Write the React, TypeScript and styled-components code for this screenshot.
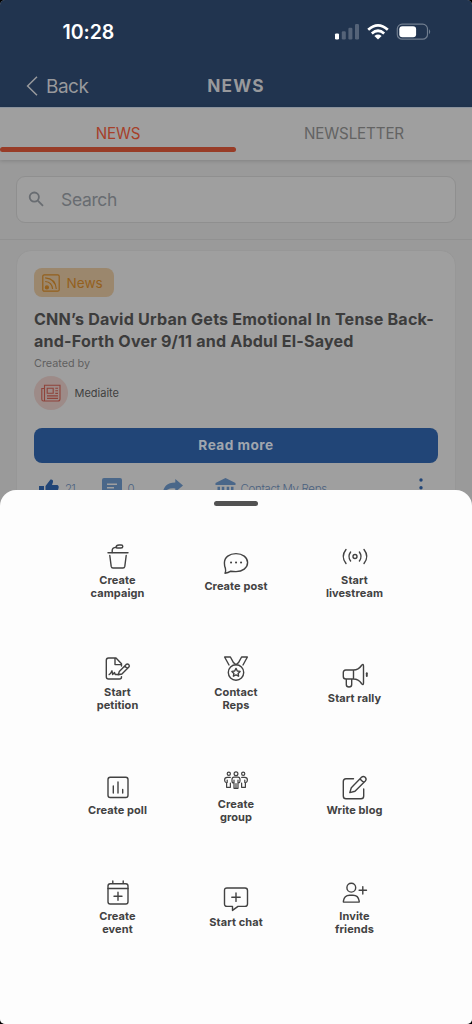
import React from 'react';
import styled, { createGlobalStyle } from 'styled-components';

const Global = createGlobalStyle`
  *, *::before, *::after { box-sizing: border-box; }
  body { margin: 0; background: #000; }
`;

const Screen = styled.div`
  position: relative;
  width: 472px;
  height: 1024px;
  overflow: hidden;
  border-radius: 5px;
  background: #9a9a9a;
  font-family: Inter, 'Liberation Sans', sans-serif;
`;

const Header = styled.header`
  height: 107px;
  background: #21344f;
`;

const StatusBar = styled.div`
  display: flex;
  align-items: center;
  justify-content: space-between;
  height: 64px;
  padding: 0 41px 0 62.5px;
`;

const Clock = styled.div`
  color: #fff;
  font-size: 19.5px;
  font-weight: 600;
  letter-spacing: -0.05px;
`;

const StatusIcons = styled.svg`
  display: block;
  width: 98px;
  height: 18px;
`;

const NavBar = styled.div`
  display: grid;
  grid-template-columns: 1fr auto 1fr;
  align-items: center;
  height: 43px;
  padding: 0 26px;
  color: #98999c;
`;

const BackLink = styled.div`
  display: flex;
  align-items: center;
  gap: 8px;
  padding-top: 1px;
  font-size: 19px;
  letter-spacing: -0.5px;
`;

const NavTitle = styled.h1`
  margin: 0;
  padding-bottom: 1px;
  font-size: 17.3px;
  font-weight: 700;
  letter-spacing: 1.2px;
`;

const Tabs = styled.nav`
  display: flex;
  height: 53px;
  background: #9f9f9f;
  border-top: 1px solid #8a929d;
  box-shadow: 0 1px 4px rgba(0, 0, 0, 0.16);
`;

const Tab = styled.div<{ $active?: boolean }>`
  display: flex;
  flex: 1;
  flex-direction: column;
  justify-content: flex-end;
  align-items: center;
  gap: 4px;
  padding-bottom: 8px;
  color: ${(p) => (p.$active ? '#a6402a' : '#636363')};
  font-size: 15.2px;
  line-height: 18px;
  letter-spacing: -0.15px;
  &::after {
    content: '';
    width: 100%;
    height: 5px;
    border-radius: 3px;
    background: ${(p) => (p.$active ? '#983c27' : 'transparent')};
  }
`;

const SearchArea = styled.div`
  height: 80px;
  padding: 16px 16px 0;
  border-bottom: 1px solid #919191;
`;

const SearchBox = styled.div`
  display: flex;
  align-items: center;
  gap: 17px;
  height: 47px;
  padding: 0 0 1px 11px;
  border: 1px solid #8f8f8f;
  border-radius: 9px;
  background: #9f9f9f;
  color: #686c71;
  font-size: 17.5px;
  letter-spacing: -0.35px;
`;

const Card = styled.article`
  display: flex;
  flex-direction: column;
  align-items: flex-start;
  height: 300px;
  margin: 10px 16px 0;
  padding: 17px 17px 0;
  border: 1px solid #979797;
  border-radius: 15px;
  background: #9f9f9f;
`;

const Tag = styled.div`
  display: flex;
  align-items: center;
  gap: 7px;
  height: 29px;
  padding: 0 11px 0 7.5px;
  border-radius: 8px;
  background: #9b876d;
  color: #94601d;
  font-size: 13.6px;
`;

const Headline = styled.h2`
  margin: 11px 0 0;
  color: #3c3c3c;
  font-size: 16.1px;
  font-weight: 700;
  line-height: 22px;
  letter-spacing: 0.18px;
  white-space: nowrap;
`;

const HeadlineLine = styled.span`
  display: block;
`;

const Caption = styled.div`
  margin-top: 4px;
  color: #606060;
  font-size: 10.8px;
  line-height: 15px;
`;

const Author = styled.div`
  display: flex;
  align-items: center;
  gap: 6.5px;
  height: 34px;
  margin-top: 5px;
  color: #3f3f3f;
  font-size: 11px;
`;

const Avatar = styled.span`
  display: grid;
  place-items: center;
  width: 34px;
  height: 34px;
  border-radius: 50%;
  background: #9d8b88;
`;

const ReadMore = styled.div`
  display: grid;
  place-items: center;
  align-self: stretch;
  height: 35px;
  margin-top: 17.5px;
  padding-bottom: 1px;
  border-radius: 8px;
  background: #214577;
  color: #a0a6ae;
  font-size: 13.7px;
  font-weight: 700;
  letter-spacing: 0.45px;
`;

const Actions = styled.div`
  display: flex;
  align-self: stretch;
  align-items: flex-start;
  padding: 15.5px 13px 0 5px;
  color: #4a6180;
  font-size: 11.5px;
  font-weight: 300;
  line-height: 23px;
`;

const Action = styled.div<{ $width: number; $gap: number; $track?: number }>`
  display: flex;
  align-items: flex-start;
  gap: ${(p) => p.$gap}px;
  width: ${(p) => p.$width}px;
  letter-spacing: ${(p) => p.$track ?? 0}px;
  white-space: nowrap;
`;

const More = styled.div`
  margin-left: auto;
`;

const Sheet = styled.section`
  position: absolute;
  right: 0;
  bottom: 0;
  left: 0;
  height: 534px;
  padding-top: 11px;
  border-radius: 16px 16px 0 0;
  background: #fdfdfd;
`;

const Handle = styled.div`
  width: 44px;
  height: 4.5px;
  margin: 0 auto;
  border-radius: 3px;
  background: #525252;
`;

const Grid = styled.div`
  display: grid;
  grid-template-columns: repeat(3, 118.5px);
  grid-auto-rows: 112px;
  justify-content: center;
  margin-top: 10.5px;
`;

const Item = styled.div`
  display: flex;
  flex-direction: column;
  align-items: center;
  justify-content: center;
  gap: 3.6px;
`;

const Label = styled.div`
  color: #424242;
  font-size: 11px;
  font-weight: 700;
  line-height: 13.2px;
  letter-spacing: 0.08px;
  text-align: center;
  white-space: pre-line;
`;

const Glyph = styled.svg`
  display: block;
  width: 28px;
  height: 26px;
  overflow: visible;
  fill: none;
  stroke: #424242;
  stroke-width: 1.4;
  stroke-linecap: round;
  stroke-linejoin: round;
`;

const items: { label: string; icon: React.ReactNode }[] = [
  {
    label: 'Create\ncampaign',
    icon: (
      <>
        <path d="M4 8.8H24M5.8 11.5L7.2 22.4Q7.5 24 9 24H19Q20.5 24 20.8 22.4L22.2 11.5" />
        <path d="M8.2 8.5V6.6Q8.2 3.6 12 3.4" />
        <path d="M12 3.4Q12.2 1 15 1H17.2Q18.8 1 18.8 2.5Q18.8 4 17 4H13.5Q12 4 12 3.4Z" />
      </>
    ),
  },
  {
    label: 'Create post',
    icon: (
      <>
        <path d="M3 22.3C4.1 20.3 3.8 19 3.4 17.4C2.7 15.8 2.4 14 2.4 12C2.4 6.3 7.5 2.6 14 2.6S25.6 6.3 25.6 11.6S20.5 20.6 14 20.6Q11 20.6 8.8 20.2Q6.2 22 3 22.3Z" />
        <path d="M9 11.6H9.1M14 11.6H14.1M19 11.6H19.1" strokeWidth="2" />
      </>
    ),
  },
  {
    label: 'Start\nlivestream',
    icon: (
      <>
        <circle cx="14" cy="12.5" r="2" />
        <path d="M9.6 8Q6.4 12.5 9.6 17M18.4 8Q21.6 12.5 18.4 17M5 5.5Q-.5 12.5 5 19.5M23 5.5Q28.5 12.5 23 19.5" />
      </>
    ),
  },
  {
    label: 'Start\npetition',
    icon: (
      <>
        <path d="M17.5 20.6V21Q17.5 23 15.5 23H4.5Q2.3 23 2.3 20.8V4.2Q2.3 2 4.5 2H12L17.5 7.7V10M11 2V8.6H17.4" />
        <path d="M5.2 18.5Q6.5 18.2 8 14.8L8.6 18.5L10.5 16.5L11.2 18.5H14" />
        <path d="M14.3 18.8L15.3 15.4L22.2 8.4Q23.4 7.4 24.8 8.6Q25.9 9.9 24.9 11.1L17.9 18L14.3 18.8ZM20.7 10L23.3 12.6" />
      </>
    ),
  },
  {
    label: 'Contact\nReps',
    icon: (
      <>
        <path d="M7 9L2.6 1H8.4L11.6 6.8M21 9L25.4 1H19.6L16.4 6.8M11.2 6.3L14 8.8L16.8 6.3" />
        <circle cx="14" cy="16.5" r="7.7" />
        <path d="M14 12.4L15.3 15L18.1 15.4L16.1 17.4L16.6 20.2L14 18.9L11.4 20.2L11.9 17.4L9.9 15.4L12.7 15Z" />
      </>
    ),
  },
  {
    label: 'Start rally',
    icon: (
      <>
        <path d="M12.5 7H4.8Q2.3 7 2.3 9.5V13.5Q2.3 16 4.8 16H12.5ZM12.5 7Q17.5 7 20.5 2.5Q22.5 0 22.5 3V20Q22.5 23 20.5 20.5Q17.5 16 12.5 16M5.3 16V21.5Q5.3 24 8 24T10.7 21.5V16" />
        <path d="M25.8 10.2V13" strokeWidth="1.9" />
      </>
    ),
  },
  {
    label: 'Create poll',
    icon: (
      <>
        <rect x="4" y="2.3" width="20" height="20.2" rx="2.2" />
        <path d="M9.3 11V18M14 7V18M18.7 14.5V18" />
      </>
    ),
  },
  {
    label: 'Create\ngroup',
    icon: (
      <g strokeWidth="1.2">
        <circle cx="6.8" cy="5.8" r="1.6" />
        <circle cx="14" cy="5.8" r="1.9" />
        <circle cx="21.2" cy="5.8" r="1.6" />
        <path d="M11.7 15Q10 15 10 13V11.5Q10 9.2 12 9.2H16Q18 9.2 18 11.5V13Q18 15 16.3 15M12 12V20.3H16V12M14 15.5V20" />
        <path d="M8.3 9.4H5.3Q2.6 9.4 2.6 12Q2.6 14.5 4.6 15V19.3H8.4V15M5.2 12V14.5M19.7 9.4H22.7Q25.4 9.4 25.4 12Q25.4 14.5 23.4 15V19.3H19.6V15M22.8 12V14.5" />
      </g>
    ),
  },
  {
    label: 'Write blog',
    icon: (
      <>
        <path d="M12.5 3.8H5Q2.3 3.8 2.3 6.5V21Q2.3 23.8 5 23.8H20Q22.7 23.8 22.7 21V14" />
        <path d="M8.8 17.6L10.3 12.7L20.5 2.3Q22.2.6 24.2 2.2Q26 4.2 24.3 6L14 16.3L8.8 17.6ZM19 3.9L22.7 7.6" />
      </>
    ),
  },
  {
    label: 'Create\nevent',
    icon: (
      <>
        <rect x="4" y="3.8" width="20" height="20.2" rx="2.2" />
        <path d="M4 8.5H24M8.8 1V3.3M19.2 1V3.3M14 12.2V20.2M10 16.2H18" />
      </>
    ),
  },
  {
    label: 'Start chat',
    icon: (
      <>
        <path d="M5 1H23Q25.5 1 25.5 3.4V17Q25.5 19.4 23 19.4H16L10.5 23.4V19.4H5Q2.5 19.4 2.5 17V3.4Q2.5 1 5 1Z" />
        <path d="M14 6V14.4M9.8 10.2H18.2" />
      </>
    ),
  },
  {
    label: 'Invite\nfriends',
    icon: (
      <>
        <circle cx="10.3" cy="7.7" r="4.4" />
        <path d="M2.4 22.1V21.1Q3.2 15.2 8.6 15.2H12Q17.3 15.2 18.2 21.1V22.1ZM21.8 6.6V14M18.1 10.3H25.5" />
      </>
    ),
  },
];

export default function App() {
  return (
    <>
      <Global />
      <Screen>
        <Header>
          <StatusBar>
            <Clock>10:28</Clock>
            <StatusIcons viewBox="0 0 98 18">
              <g fill="#fff">
                <rect x="2" y="10.4" width="4" height="6" rx="1.2" />
                <g opacity=".23">
                  <rect x="8.8" y="8.3" width="4" height="8.1" rx="1.2" />
                  <rect x="15.4" y="4.8" width="4" height="11.6" rx="1.2" />
                  <rect x="22" y="1" width="4" height="15.4" rx="1.2" />
                </g>
              </g>
              <g fill="none" stroke="#fff" strokeWidth="2.7">
                <path d="M35.2 6.7Q45-2.1 54.8 6.7" />
                <path d="M38.8 10.5Q45 5 51.2 10.5" />
              </g>
              <path d="M41.4 12.9Q45 10.1 48.6 12.9L45 16.4Z" fill="#fff" />
              <rect x="64.3" y="1.2" width="30.2" height="15" rx="4.8" fill="none" stroke="#707d8f" strokeWidth="1.2" />
              <path d="M96 6.2Q98.4 8.7 96 11.2Z" fill="#707d8f" />
              <rect x="66.3" y="3.2" width="16.8" height="11" rx="3" fill="#fff" />
            </StatusIcons>
          </StatusBar>
          <NavBar>
            <BackLink>
              <svg width="12" height="20" viewBox="0 0 12 20" fill="none" stroke="currentColor" strokeWidth="1.5">
                <path d="M11 .8L1.6 10L11 19.2" />
              </svg>
              Back
            </BackLink>
            <NavTitle>NEWS</NavTitle>
          </NavBar>
        </Header>
        <Tabs>
          <Tab $active>NEWS</Tab>
          <Tab>NEWSLETTER</Tab>
        </Tabs>
        <SearchArea>
          <SearchBox>
            <svg width="16" height="16" viewBox="0 0 16 16" fill="none" stroke="currentColor" strokeWidth="1.8">
              <circle cx="6.3" cy="6.1" r="4.6" />
              <path d="M9.8 9.7L15 14.8" />
            </svg>
            Search
          </SearchBox>
        </SearchArea>
        <Card>
          <Tag>
            <svg width="18" height="18" viewBox="0 0 18 18" fill="none" stroke="currentColor" strokeWidth="1.2">
              <rect x=".8" y=".8" width="16.4" height="16.4" rx="1.5" />
              <path d="M3.2 3.8Q13.5 4.5 14.3 15M3.2 7.5Q10 8 10.6 15" />
              <circle cx="4.9" cy="13.4" r="1.5" fill="currentColor" />
            </svg>
            News
          </Tag>
          <Headline>
            <HeadlineLine>CNN’s David Urban Gets Emotional In Tense Back-</HeadlineLine>
            <HeadlineLine>and-Forth Over 9/11 and Abdul El-Sayed</HeadlineLine>
          </Headline>
          <Caption>Created by</Caption>
          <Author>
            <Avatar>
              <svg width="20" height="18" viewBox="0 0 20 18" fill="none" stroke="#8f433a" strokeWidth="1.1">
                <path d="M3.5 16.8V1.2H19V15Q19 17 17 17H2.5Q.8 17 .8 15.2V4.5H3.5M6.2 4.2H12.2V9.2H6.2ZM14.3 4.2H17M14.3 6.8H17M14.3 9.4H17M6 11.9H17M6 14.4H17" />
              </svg>
            </Avatar>
            Mediaite
          </Author>
          <ReadMore>Read more</ReadMore>
          <Actions>
            <Action $width={62.5} $gap={6} $track={-0.8}>
              <svg width="20" height="20" viewBox="0 0 20 20" fill="#214577">
                <path d="M0 8H5V19H0ZM6.5 8L11.5 1.5Q14.5 1.2 14 4L13 7H18.5Q20 7.5 19.7 9.5L17.5 17.5Q17 19 15.5 19H6.5Z" />
              </svg>
              21
            </Action>
            <Action $width={61} $gap={6}>
              <svg width="20" height="20" viewBox="0 0 20 20">
                <path d="M2 0H18Q20 0 20 2V20L16 16H2Q0 16 0 14V2Q0 0 2 0Z" fill="#4a6789" />
                <path d="M5 6.2H15M5 9.8H12" stroke="#9f9f9f" strokeWidth="1.4" />
              </svg>
              0
            </Action>
            <Action $width={52.5} $gap={0}>
              <svg width="20" height="20" viewBox="0 0 20 20" fill="#4a6789">
                <path d="M12.3 1L20 7.5L12.3 14V10.5Q4 9.5 0 16Q0 5 12.3 4.6Z" />
              </svg>
            </Action>
            <Action $width={140} $gap={4.5} $track={-0.35}>
              <svg width="21" height="20" viewBox="0 0 21 20" fill="#4a6789">
                <path d="M10.5 0L20.5 5V7H.5V5ZM2.5 8.8H5V16H2.5ZM6.8 8.8H9.3V16H6.8ZM11.7 8.8H14.2V16H11.7ZM16 8.8H18.5V16H16Z" />
              </svg>
              Contact My Reps
            </Action>
            <More>
              <svg width="8" height="20" viewBox="0 0 8 20" fill="#214577">
                <circle cx="4" cy="2" r="1.7" />
                <circle cx="4" cy="9.7" r="1.7" />
                <circle cx="4" cy="17.4" r="1.7" />
              </svg>
            </More>
          </Actions>
        </Card>
        <Sheet>
          <Handle />
          <Grid>
            {items.map((item) => (
              <Item key={item.label}>
                <Glyph viewBox="0 0 28 26">{item.icon}</Glyph>
                <Label>{item.label}</Label>
              </Item>
            ))}
          </Grid>
        </Sheet>
      </Screen>
    </>
  );
}
